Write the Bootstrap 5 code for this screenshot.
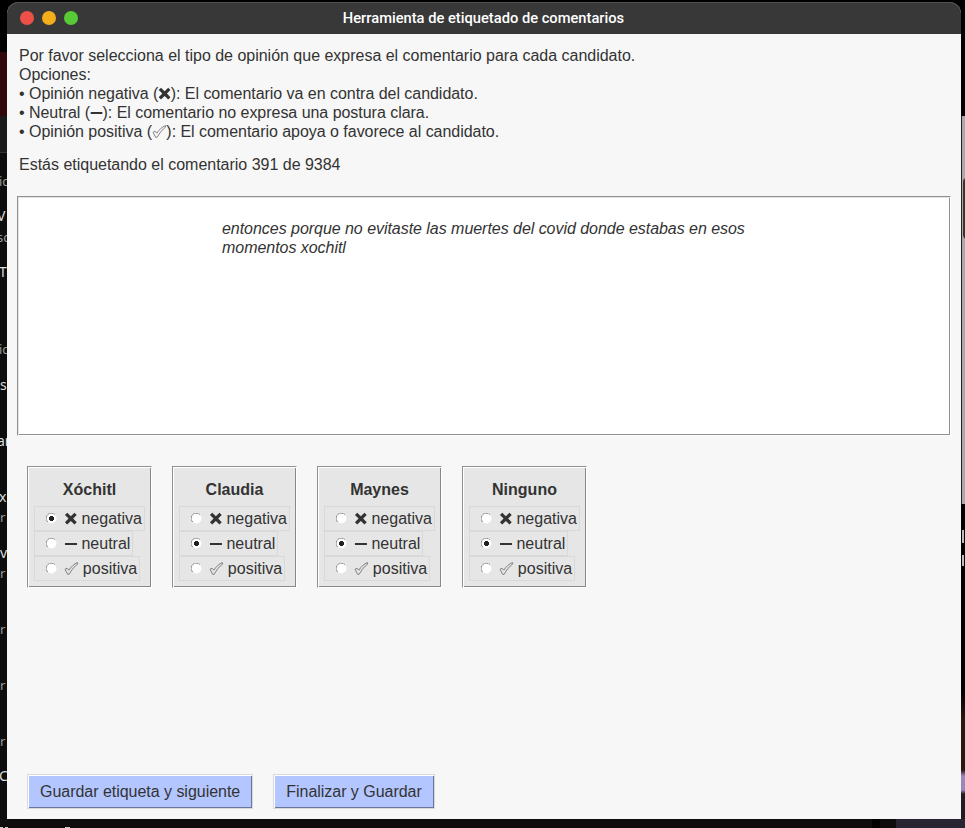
<!DOCTYPE html>
<html lang="es">
<head>
<meta charset="utf-8">
<meta name="viewport" content="width=device-width, initial-scale=1">
<title>Herramienta de etiquetado de comentarios</title>
<link rel="stylesheet" href="https://cdn.jsdelivr.net/npm/bootstrap@5.3.0/dist/css/bootstrap.min.css">
<style>
body{width:965px;height:828px;background:#000;font:16px/19px "Liberation Sans","DejaVu Sans",sans-serif;color:#333}
.desk{width:965px;height:828px}
.desk-bit{position:absolute}
.desk-left{left:0;top:0;width:7px;height:828px;background:linear-gradient(#000 52px,#31090c 52px 116px,#1a1a1a 116px 152px,#333 152px 153px,#0d0d0d 153px)}
.desk-left span{position:absolute;left:0;white-space:nowrap;font:14px/20px "Noto Sans",sans-serif;color:#ddd}
.desk-left .dim{font-size:13px;color:#999}
.desk-left .cut{left:-3px}
.desk-left .cut-i{left:-1px}
.desk-right{left:961px;top:0;width:4px;height:828px;background:linear-gradient(#000 116px,#aaa 116px 504px,#000 504px 690px,#2a1712 720px 770px,#9a88bd 776px 790px,#211c20 794px)}
.desk-right::before{content:"";position:absolute;left:0;top:116px;width:1px;height:388px;background:#222}
.desk-right::after{content:"";position:absolute;left:2px;top:178px;width:8px;height:61px;background:#3a3520;border-radius:4px}
.desk-right i{position:absolute;left:1px;width:2px;background:#bbb}
.desk-bottom{left:0;top:819px;width:965px;height:9px;background:linear-gradient(90deg,#0d0d0d 872px,#000 872px 880px,#0d0d0d 880px 896px,#292431 896px)}
.desk-bottom::after{content:"";position:absolute;left:0;bottom:0;width:3px;height:1px;background:#ccc;box-shadow:5px 0 #ccc,65px 0 #ccc,67px 0 #ccc}
.app-window{position:absolute;left:7px;top:2px;width:954px;height:817px;background:#f7f7f7;border-radius:12px 12px 0 0}
.titlebar{height:32px;background:#383838;box-shadow:inset 0 1px #505050;border-radius:12px 12px 0 0;color:#fff;font:500 14.7px/32px Roboto,sans-serif;padding-right:1px}
.lights{left:13px;top:9px;gap:8px}
.light{width:14px;height:14px}
.intro{padding:12px 12px 0;letter-spacing:-.012px}
.status{margin-top:14px}
.tight{letter-spacing:-.035px}
.sunk{border:1px solid;border-color:#909090 #fff #fff #909090}
.comment-box{margin:22px 10px 0;height:240px;background:#fff;box-shadow:inset 1px 1px #e4e4e4,inset -1px -1px #909090;padding:22px 0 0 204px}
.comment-box p{width:540px;letter-spacing:-.04px}
.candidates{margin:30px 20px 0;gap:20px}
.candidate{width:125px;height:122px;background:#e6e6e6;box-shadow:inset 1px 1px #fff,inset -1px -1px #888;padding:13px 6px 0}
.candidate h2{font-size:16px;line-height:19px;margin:0 0 7px;font-weight:700}
.choice{height:25px;border:1px solid #d9d9d9;padding:0 2px 0 11px;white-space:pre}
.choice .dot{margin-right:7px;flex:none}
.sym{width:12.5px;height:13px;vertical-align:-1px;overflow:visible}
.choice .sym{width:13px}
.sym-check,.choice .sym-check{width:14.4px}
.actions{margin:186px 20px 0;gap:20px}
.action{height:35px;border:1px solid #d9d9d9;border-radius:0;background:#b3c6ff;box-shadow:inset 1px 1px #fff,inset -1px -1px #6b779a;padding:0 12px;color:#333;line-height:19px;font-size:16px;letter-spacing:-.03px;white-space:nowrap}
.action-save{width:226px}
.action-end{width:162px}
</style>
<script src="https://cdn.jsdelivr.net/npm/bootstrap@5.3.0/dist/js/bootstrap.bundle.min.js"></script>
</head>
<body>
<svg width="0" height="0" class="position-absolute">
<symbol id="off" viewBox="0 0 11 11"><circle cx="5.5" cy="5.5" r="5" fill="#fff"/><path d="M1.7 9A5 5 0 0 1 9 1.7" fill="none" stroke="#888" stroke-width="1" stroke-dasharray="3 .6"/></symbol>
<symbol id="on" viewBox="0 0 11 11"><use href="#off"/><path d="M4 3h3v1h1v3h-1v1h-3v-1h-1v-3h1z" fill="#222"/></symbol>
<symbol id="cross" viewBox="0 0 12.5 13"><path d="M.7 3 3 .7 6.6 4.3 10.2.7 12.5 3 8.9 6.6 12.5 10.2 10.2 12.5 6.6 8.9 3 12.5.7 10.2 4.3 6.6Z" fill="#333"/></symbol>
<symbol id="minus" viewBox="0 0 12.5 13"><path d="M.7 6h12v2h-12z" fill="#333"/></symbol>
<symbol id="check" viewBox="0 0 14.3 13"><path d="M1 7.3 3 6.2 4.8 8.2C7.2 4.5 9.9 2 13.4.6L13.7 2C10.4 4.3 7.6 7.8 5.2 12.2L3.6 12.3Z" fill="none" stroke="#666" stroke-width=".8" stroke-linejoin="round"/></symbol>
</svg>
<div class="desk position-relative overflow-hidden">
<div class="desk-bit desk-left overflow-hidden" aria-hidden="true">
<span class="dim cut-i" style="top:171px">ic</span><span class="cut" style="top:206px">V</span><span class="dim cut" style="top:227px">sc</span><span class="cut-i" style="top:262px">T</span><span class="dim cut-i" style="top:339px">ic</span><span style="top:375px">s</span><span class="cut" style="top:431px">ar</span><span class="cut-i" style="top:487px">x</span><span class="dim" style="top:507px">r</span><span style="top:543px">v</span><span class="dim" style="top:563px">r</span><span class="dim" style="top:619px">r</span><span class="dim" style="top:675px">r</span><span class="dim" style="top:731px">r</span><span class="cut-i" style="top:766px">C</span>
</div>
<div class="desk-bit desk-right"><i style="top:530px;height:13px"></i><i style="top:555px;height:11px"></i></div>
<div class="desk-bit desk-bottom overflow-hidden"></div>
<main class="app-window">
<header class="titlebar position-relative text-center">
<div class="lights position-absolute d-flex"><i class="light rounded-circle" style="background:#ed5049"></i><i class="light rounded-circle" style="background:#f3ae1b"></i><i class="light rounded-circle" style="background:#57ca35"></i></div>
Herramienta de etiquetado de comentarios
</header>
<section class="intro">
<div>Por favor selecciona el tipo de opinión que expresa el comentario para cada candidato.</div>
<div>Opciones:</div>
<div class="tight">• Opinión negativa (<svg class="sym"><use href="#cross"/></svg>): El comentario va en contra del candidato.</div>
<div class="tight">• Neutral (<svg class="sym"><use href="#minus"/></svg>): El comentario no expresa una postura clara.</div>
<div class="tight">• Opinión positiva (<svg class="sym sym-check"><use href="#check"/></svg>): El comentario apoya o favorece al candidato.</div>
<div class="status">Estás etiquetando el comentario 391 de 9384</div>
</section>
<section class="comment-box sunk"><p class="fst-italic mb-0">entonces porque no evitaste las muertes del covid donde estabas en esos momentos xochitl</p></section>
<section class="candidates d-flex">
<div class="candidate sunk d-flex flex-column align-items-start"><h2 class="align-self-center">Xóchitl</h2>
<label class="choice d-flex align-items-center"><svg class="dot" width="11" height="11"><use href="#on"/></svg><span><svg class="sym"><use href="#cross"/></svg> negativa</span></label>
<label class="choice d-flex align-items-center"><svg class="dot" width="11" height="11"><use href="#off"/></svg><span><svg class="sym"><use href="#minus"/></svg> neutral</span></label>
<label class="choice d-flex align-items-center"><svg class="dot" width="11" height="11"><use href="#off"/></svg><span><svg class="sym sym-check"><use href="#check"/></svg> positiva</span></label></div>
<div class="candidate sunk d-flex flex-column align-items-start"><h2 class="align-self-center">Claudia</h2>
<label class="choice d-flex align-items-center"><svg class="dot" width="11" height="11"><use href="#off"/></svg><span><svg class="sym"><use href="#cross"/></svg> negativa</span></label>
<label class="choice d-flex align-items-center"><svg class="dot" width="11" height="11"><use href="#on"/></svg><span><svg class="sym"><use href="#minus"/></svg> neutral</span></label>
<label class="choice d-flex align-items-center"><svg class="dot" width="11" height="11"><use href="#off"/></svg><span><svg class="sym sym-check"><use href="#check"/></svg> positiva</span></label></div>
<div class="candidate sunk d-flex flex-column align-items-start"><h2 class="align-self-center">Maynes</h2>
<label class="choice d-flex align-items-center"><svg class="dot" width="11" height="11"><use href="#off"/></svg><span><svg class="sym"><use href="#cross"/></svg> negativa</span></label>
<label class="choice d-flex align-items-center"><svg class="dot" width="11" height="11"><use href="#on"/></svg><span><svg class="sym"><use href="#minus"/></svg> neutral</span></label>
<label class="choice d-flex align-items-center"><svg class="dot" width="11" height="11"><use href="#off"/></svg><span><svg class="sym sym-check"><use href="#check"/></svg> positiva</span></label></div>
<div class="candidate sunk d-flex flex-column align-items-start"><h2 class="align-self-center">Ninguno</h2>
<label class="choice d-flex align-items-center"><svg class="dot" width="11" height="11"><use href="#off"/></svg><span><svg class="sym"><use href="#cross"/></svg> negativa</span></label>
<label class="choice d-flex align-items-center"><svg class="dot" width="11" height="11"><use href="#on"/></svg><span><svg class="sym"><use href="#minus"/></svg> neutral</span></label>
<label class="choice d-flex align-items-center"><svg class="dot" width="11" height="11"><use href="#off"/></svg><span><svg class="sym sym-check"><use href="#check"/></svg> positiva</span></label></div>
</section>
<section class="actions d-flex"><button class="btn action action-save">Guardar etiqueta y siguiente</button><button class="btn action action-end">Finalizar y Guardar</button></section>
</main>
</div>
</body>
</html>
